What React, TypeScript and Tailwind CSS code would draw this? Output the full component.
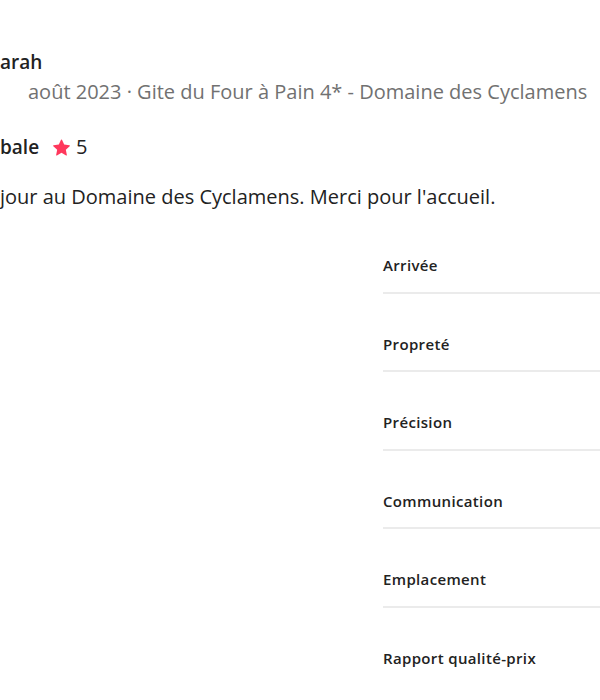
import React from "react";

const rows = ["Arrivée", "Propreté", "Précision", "Communication", "Emplacement", "Rapport qualité-prix"];

export default function App() {
  return (
    <div className="w-[600px] h-[700px] overflow-hidden bg-white" style={{ fontFamily: '"Open Sans", "Noto Sans", sans-serif' }}>
      <div className="pt-[48px] flex flex-col">
        <div className="text-[19px] leading-[28px] font-semibold text-[#222222]">arah</div>
        <div className="text-[20px] leading-[28px] text-[#717171] ml-[28px] mt-[2px]">août 2023 · Gite du Four à Pain 4* - Domaine des Cyclamens</div>
        <div className="flex items-center text-[19px] leading-[28px] text-[#222222] mt-[27px]">
          <span className="font-semibold">bale</span>
          <svg viewBox="0 0 32 32" className="w-[17px] h-[17px] ml-[14px] mr-[6px] fill-[#ff385c]">
            <path d="M15.1 1.58l-4.13 8.88-9.86 1.27a1 1 0 0 0-.54 1.74l7.3 6.57-1.97 9.85a1 1 0 0 0 1.48 1.06l8.62-5 8.63 5a1 1 0 0 0 1.48-1.06l-1.97-9.85 7.3-6.57a1 1 0 0 0-.55-1.730l-9.86-1.28-4.12-8.88a1 1 0 0 0-1.82 0z" />
          </svg>
          <span className="text-[20px]">5</span>
        </div>
        <div className="text-[20px] leading-[28px] text-[#222222] mt-[22px]">jour au Domaine des Cyclamens. Merci pour l'accueil.</div>
        <div className="ml-[383px] mt-[4px] flex flex-col">
          {rows.map((r, i) => (
            <div key={r} className={`pt-[40px] pb-[16.5px] ${i < rows.length - 1 ? "border-b-2 border-[#ebebeb]" : ""}`}>
              <div className="text-[15px] leading-[20px] tracking-[0.35px] font-semibold text-[#222222]">{r}</div>
            </div>
          ))}
        </div>
      </div>
    </div>
  );
}
